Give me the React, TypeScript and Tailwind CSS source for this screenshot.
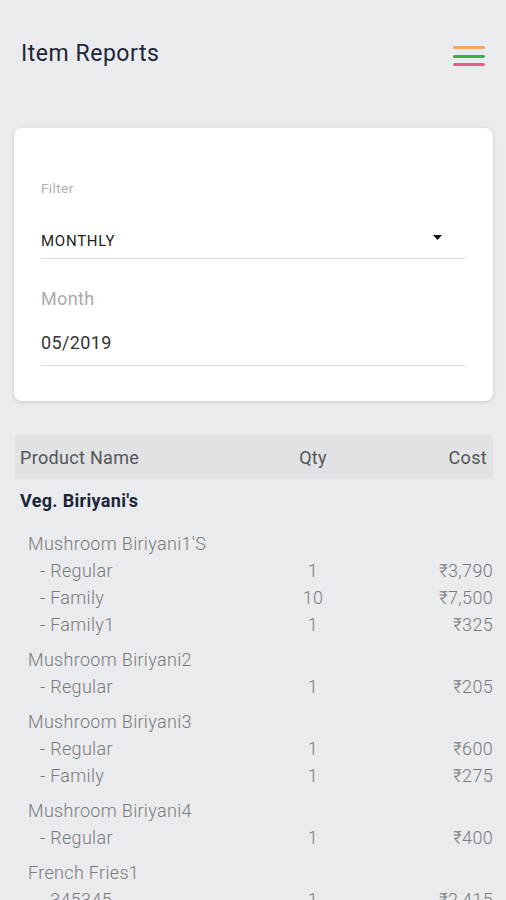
import React from "react";

type Sub = { name: string; qty: string; cost: string };
type Item = { name: string; subs: Sub[] };

const items: Item[] = [
  {
    name: "Mushroom Biriyani1'S",
    subs: [
      { name: "- Regular", qty: "1", cost: "₹3,790" },
      { name: "- Family", qty: "10", cost: "₹7,500" },
      { name: "- Family1", qty: "1", cost: "₹325" },
    ],
  },
  { name: "Mushroom Biriyani2", subs: [{ name: "- Regular", qty: "1", cost: "₹205" }] },
  {
    name: "Mushroom Biriyani3",
    subs: [
      { name: "- Regular", qty: "1", cost: "₹600" },
      { name: "- Family", qty: "1", cost: "₹275" },
    ],
  },
  { name: "Mushroom Biriyani4", subs: [{ name: "- Regular", qty: "1", cost: "₹400" }] },
  { name: "French Fries1", subs: [{ name: "- 345345", qty: "1", cost: "₹2,415" }] },
];

export default function App() {
  return (
    <div
      className="h-[900px] w-[506px] overflow-hidden bg-[#e9ebee]"
      style={{ fontFamily: "Roboto, 'Liberation Sans', sans-serif" }}
    >
      {/* Header */}
      <div className="flex h-[108px] items-center justify-between pl-[21px] pr-[21px]">
        <div className="text-[23px] leading-[28px] tracking-[0.023em] text-[#1c2536]">Item Reports</div>
        <div className="flex w-[32px] flex-col gap-[5.5px] pt-[4px]">
          <div className="h-[3px] rounded-full bg-[#f4a65a]" />
          <div className="h-[3px] rounded-full bg-[#3dac4a]" />
          <div className="h-[3px] rounded-full bg-[#e65b8e]" />
        </div>
      </div>

      {/* Filter card */}
      <div className="ml-[14px] mr-[13px] mt-[20px] rounded-[8px] bg-white px-[27px] pb-[35px] pt-[52px] shadow-[0_1px_4px_rgba(0,0,0,0.15)]">
        <div className="text-[13.5px] leading-[16px] tracking-[0.03em] text-[#b0b0b0]">Filter</div>
        <div className="mt-[35px] flex items-center justify-between border-b border-[#dcdcdc] pb-[7px]">
          <div className="text-[15px] leading-[20px] tracking-[0.05em] text-[#222]">MONTHLY</div>
          <svg width="9" height="5" viewBox="0 0 9 5" className="mr-[24px] -mt-[8px]">
            <path d="M0 0 L9 0 L4.5 5 Z" fill="#111" />
          </svg>
        </div>
        <div className="mt-[29px] text-[18px] leading-[22px] tracking-[0.02em] text-[#a9a9a9]">Month</div>
        <div className="mt-[22px] border-b border-[#dcdcdc] pb-[11px] text-[18px] leading-[22px] tracking-[0.02em] text-[#333]">
          05/2019
        </div>
      </div>

      {/* Table */}
      <div className="ml-[15px] mr-[13px] mt-[34px] tracking-[0.02em]">
        <div className="flex h-[44px] items-center bg-[#e0e2e5] pl-[5px] pr-[6px] text-[18px] text-[#555]">
          <div className="flex-1">Product Name</div>
          <div className="w-[80px] text-center">Qty</div>
          <div className="w-[134px] text-right">Cost</div>
        </div>
        <div className="mt-[10px] pl-[5px] text-[18px] font-bold leading-[24px] text-[#1c2536]">
          Veg. Biriyani's
        </div>
        <div className="mt-[17px] flex flex-col gap-[8px]">
          {items.map((it) => (
            <div key={it.name} className="flex flex-col">
              <div className="pl-[13px] text-[18px] font-light leading-[27px] text-[#7a7a7a]">{it.name}</div>
              {it.subs.map((s, i) => (
                <div key={i} className="flex text-[18px] font-light leading-[27px] text-[#7a7a7a]">
                  <div className="flex-1 pl-[25px]">{s.name}</div>
                  <div className="w-[80px] text-center">{s.qty}</div>
                  <div className="w-[140px] text-right">{s.cost}</div>
                </div>
              ))}
            </div>
          ))}
        </div>
      </div>
    </div>
  );
}
